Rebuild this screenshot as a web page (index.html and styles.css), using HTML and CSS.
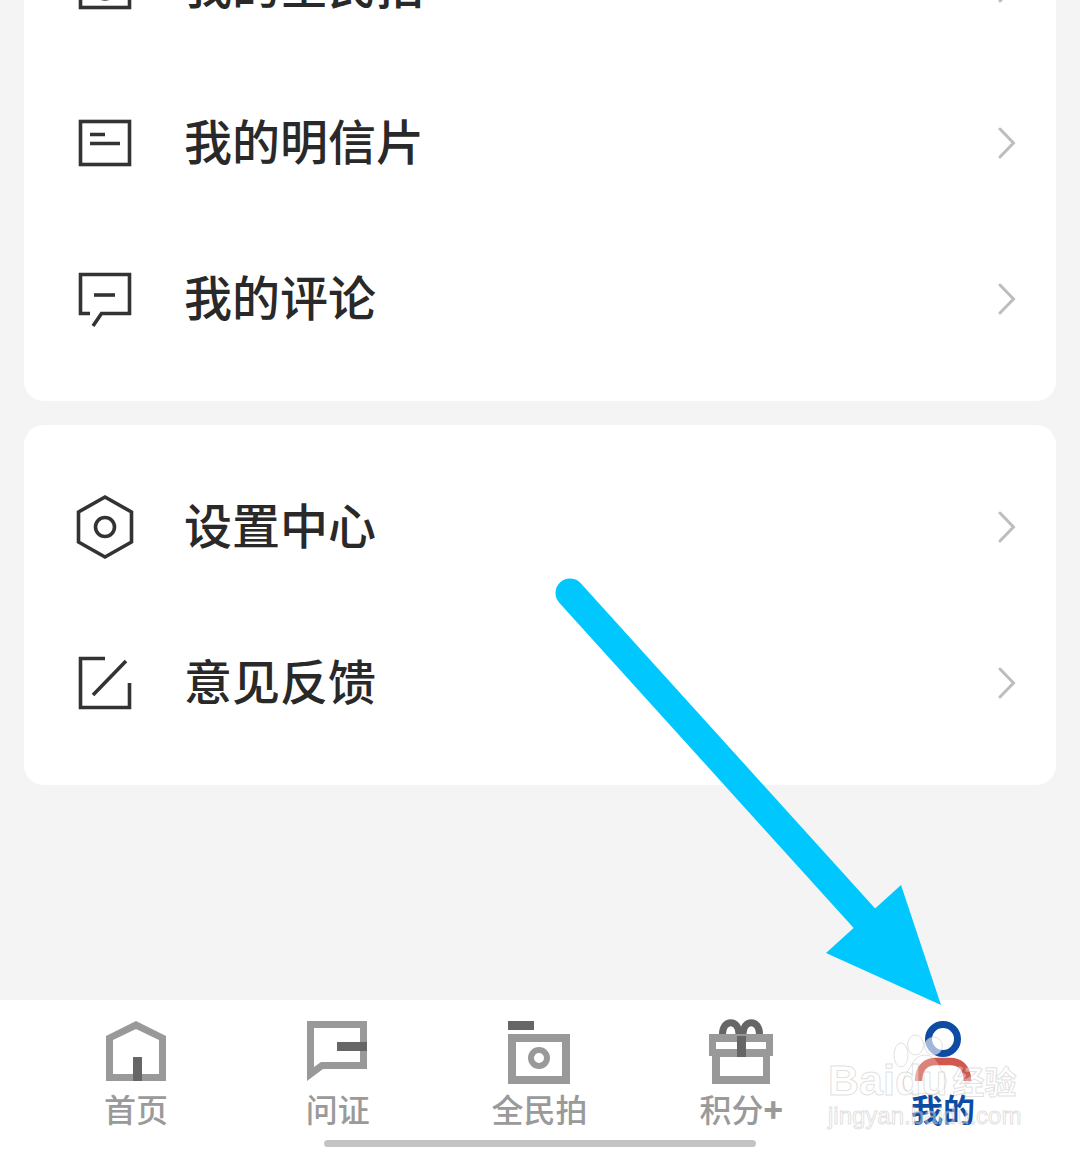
FILE: index.html
```html
<!DOCTYPE html>
<html lang="zh-CN">
<head>
<meta charset="utf-8">
<title>我的</title>
<link rel="stylesheet" href="styles.css">
</head>
<body>
<div class="page">
  <main class="content">
    <section class="card card-first">
      <div class="row">
        <svg class="row-icon" viewBox="0 0 60 66"><rect x="5.5" y="11.5" width="49" height="42"/><circle cx="30" cy="35" r="10"/></svg>
        <span class="row-label">我的全民拍</span>
        <svg class="chevron" viewBox="0 0 20 32"><path d="M3 2 L16.5 16 L3 30"/></svg>
      </div>
      <div class="row">
        <svg class="row-icon" viewBox="0 0 60 66"><rect x="5.5" y="11.5" width="49" height="43"/><path d="M15 24.5 H30 M15 33.5 H45"/></svg>
        <span class="row-label">我的明信片</span>
        <svg class="chevron" viewBox="0 0 20 32"><path d="M3 2 L16.5 16 L3 30"/></svg>
      </div>
      <div class="row">
        <svg class="row-icon" viewBox="0 0 60 66"><path d="M15 47.5 H5.5 V8.5 H54.5 V47.5 H26.5 L18 60"/><path d="M19 29 H40"/></svg>
        <span class="row-label">我的评论</span>
        <svg class="chevron" viewBox="0 0 20 32"><path d="M3 2 L16.5 16 L3 30"/></svg>
      </div>
    </section>
    <section class="card">
      <div class="row">
        <svg class="row-icon" viewBox="0 0 60 66"><path d="M30 3 L56.5 18 V48 L30 63 L3.5 48 V18 Z"/><circle cx="30" cy="33" r="9.5"/></svg>
        <span class="row-label">设置中心</span>
        <svg class="chevron" viewBox="0 0 20 32"><path d="M3 2 L16.5 16 L3 30"/></svg>
      </div>
      <div class="row">
        <svg class="row-icon" viewBox="0 0 60 66"><path d="M30 8.5 H5.5 V57.5 H54.5 V33"/><path d="M18 45 L51 11"/></svg>
        <span class="row-label">意见反馈</span>
        <svg class="chevron" viewBox="0 0 20 32"><path d="M3 2 L16.5 16 L3 30"/></svg>
      </div>
    </section>
  </main>
  <nav class="tabbar">
    <div class="tab">
      <svg class="tab-icon" viewBox="0 0 66 60">
        <path class="tone-light" fill-rule="evenodd" d="M3 15 L33 0 L63 15 V60 H3 Z M10 19 V53 H56 V19 L33 8 Z"/>
        <rect class="tone-dark" x="30" y="36" width="9" height="24"/>
      </svg>
      <span class="tab-label">首页</span>
    </div>
    <div class="tab">
      <svg class="tab-icon" viewBox="0 0 66 60">
        <path class="tone-light" fill-rule="evenodd" d="M2 0 H62 V48 H18 L2 60 Z M9 7 V46 L16 41 H55 V7 Z"/>
        <rect class="tone-dark" x="32" y="21" width="30" height="9"/>
      </svg>
      <span class="tab-label">问证</span>
    </div>
    <div class="tab">
      <svg class="tab-icon" viewBox="0 0 66 60">
        <rect class="tone-dark" x="2" y="0" width="26" height="9"/>
        <path class="tone-light" fill-rule="evenodd" d="M2 13 H64 V63 H2 Z M10 21 V55 H56 V21 Z"/>
        <circle class="ring-light" cx="33" cy="37" r="8"/>
      </svg>
      <span class="tab-label">全民拍</span>
    </div>
    <div class="tab">
      <svg class="tab-icon" viewBox="0 0 66 60">
        <path class="loop-dark" d="M14.5 13 C14.5 -2 31 -2 31 13 M35 13 C35 -2 51.5 -2 51.5 13"/>
        <path class="tone-light" fill-rule="evenodd" d="M1 13 H65 V35 H62 V63 H4 V35 H1 Z M8 21 V28 H58 V21 Z M12 36 V55 H55 V36 Z"/>
        <rect class="tone-dark" x="29" y="15" width="9" height="21"/>
      </svg>
      <span class="tab-label">积分<b class="tab-plus">+</b></span>
    </div>
    <div class="tab tab-active">
      <svg class="tab-icon" viewBox="0 0 66 60">
        <circle class="ring-blue" cx="33" cy="18" r="14.5"/>
        <path class="body-red" d="M8.5 60 C8.5 45 18 40.5 26 40.5 H40 C48 40.5 57.5 45 57.5 60"/>
      </svg>
      <span class="tab-label">我的</span>
    </div>
  </nav>
  <div class="home-bar"></div>
  <div class="watermark">
    <svg class="paw" viewBox="0 0 130 70">
      <ellipse cx="13" cy="23" rx="7" ry="12"/>
      <ellipse cx="27.5" cy="13" rx="8" ry="10"/>
      <ellipse cx="45.5" cy="14" rx="9" ry="9"/>
      <path class="paw-palm" d="M37 23 C47 23 50 33 56 42 C62 52 54 64 44 62 C38 61 34 61 28 62 C18 64 12 52 18 42 C24 33 27 23 37 23 Z"/>
    </svg>
    <div class="wm-top"><span class="wm-logo">Baidu</span><span class="wm-cn">经验</span></div>
    <div class="wm-url">jingyan.baidu.com</div>
  </div>
  <svg class="arrow" viewBox="0 0 1080 1150">
    <path class="arrow-shaft" d="M570 593 L895 952"/>
    <path class="arrow-head" d="M941 1005 L901 885 L826 953 Z"/>
  </svg>
</div>
</body>
</html>
```

FILE: styles.css
```css
* {
  box-sizing: border-box;
}

html,
body {
  margin: 0;
  padding: 0;
}

body {
  width: 1080px;
  height: 1150px;
  overflow: hidden;
  background: #f4f4f4;
  font-family: "Noto Sans CJK SC", "Noto Sans", sans-serif;
}

.page {
  position: relative;
  display: flex;
  flex-direction: column;
  width: 1080px;
  height: 1150px;
  overflow: hidden;
}

.content {
  flex: 1;
  min-height: 0;
  padding: 0 24px;
}

.card {
  margin-bottom: 24px;
  padding: 24px 0;
  background: #fff;
  border-radius: 20px;
}

.card-first {
  margin-top: -115px;
  border-radius: 0 0 20px 20px;
}

.row {
  display: flex;
  align-items: center;
  gap: 49px;
  height: 156px;
  padding: 0 39px 0 51px;
}

.row-icon {
  flex: none;
  width: 60px;
  height: 66px;
  overflow: visible;
  fill: none;
  stroke: #333;
  stroke-width: 3.6;
}

.row-label {
  flex: 1;
  padding-bottom: 8px;
  font-size: 48px;
  font-weight: 500;
  line-height: 60px;
  color: #292929;
}

.chevron {
  flex: none;
  width: 20px;
  height: 32px;
  fill: none;
  stroke: #bdbdbd;
  stroke-width: 3;
  stroke-linecap: round;
}

.tabbar {
  flex: none;
  display: grid;
  grid-template-columns: repeat(5, 1fr);
  height: 150px;
  padding: 21px 36px 0 35px;
  background: #fff;
}

.tab {
  display: flex;
  flex-direction: column;
  align-items: center;
}

.tab-icon {
  display: block;
  width: 66px;
  height: 60px;
  overflow: visible;
}

.tab-label {
  margin-top: 7px;
  font-size: 32px;
  font-weight: 500;
  line-height: 40px;
  color: #9a9a9a;
  white-space: nowrap;
}

.tab-plus {
  font-weight: 900;
}

.tab-active .tab-label {
  color: #0d4ca3;
  font-weight: 700;
}

.tone-light {
  fill: #999;
}

.tone-dark {
  fill: #666;
}

.ring-light {
  fill: none;
  stroke: #999;
  stroke-width: 6;
}

.loop-dark {
  fill: none;
  stroke: #666;
  stroke-width: 7;
}

.ring-blue {
  fill: none;
  stroke: #0d4ca3;
  stroke-width: 7;
}

.body-red {
  fill: none;
  stroke: #d2584f;
  stroke-width: 7.5;
}

.home-bar {
  position: absolute;
  left: 324px;
  top: 1140px;
  width: 432px;
  height: 7px;
  border-radius: 4px;
  background: #c4c4c4;
}

.watermark {
  position: absolute;
  left: 828px;
  top: 1057px;
  width: 200px;
  color: rgba(255, 255, 255, 0.4);
  -webkit-text-stroke: 1px rgba(175, 175, 175, 0.4);
}

.paw {
  position: absolute;
  left: 60px;
  top: -25px;
  width: 130px;
  height: 70px;
  overflow: visible;
  fill: rgba(255, 255, 255, 0.6);
  stroke: rgba(180, 180, 180, 0.4);
  stroke-width: 1;
}

.paw .paw-palm {
  fill: rgba(255, 255, 255, 0.25);
}

.wm-top {
  position: relative;
  display: flex;
  align-items: center;
  gap: 5px;
  height: 46px;
}

.wm-logo {
  font-family: "Liberation Sans", sans-serif;
  font-size: 43px;
  font-weight: 700;
  line-height: 46px;
}

.wm-cn {
  font-size: 32px;
  font-weight: 700;
  line-height: 46px;
}

.wm-url {
  position: relative;
  font-family: "Liberation Sans", sans-serif;
  font-size: 24px;
  line-height: 25px;
  white-space: nowrap;
}

.arrow {
  position: absolute;
  left: 0;
  top: 0;
  width: 1080px;
  height: 1150px;
  pointer-events: none;
}

.arrow-shaft {
  fill: none;
  stroke: #00c8ff;
  stroke-width: 29;
  stroke-linecap: round;
}

.arrow-head {
  fill: #00c8ff;
}
```
